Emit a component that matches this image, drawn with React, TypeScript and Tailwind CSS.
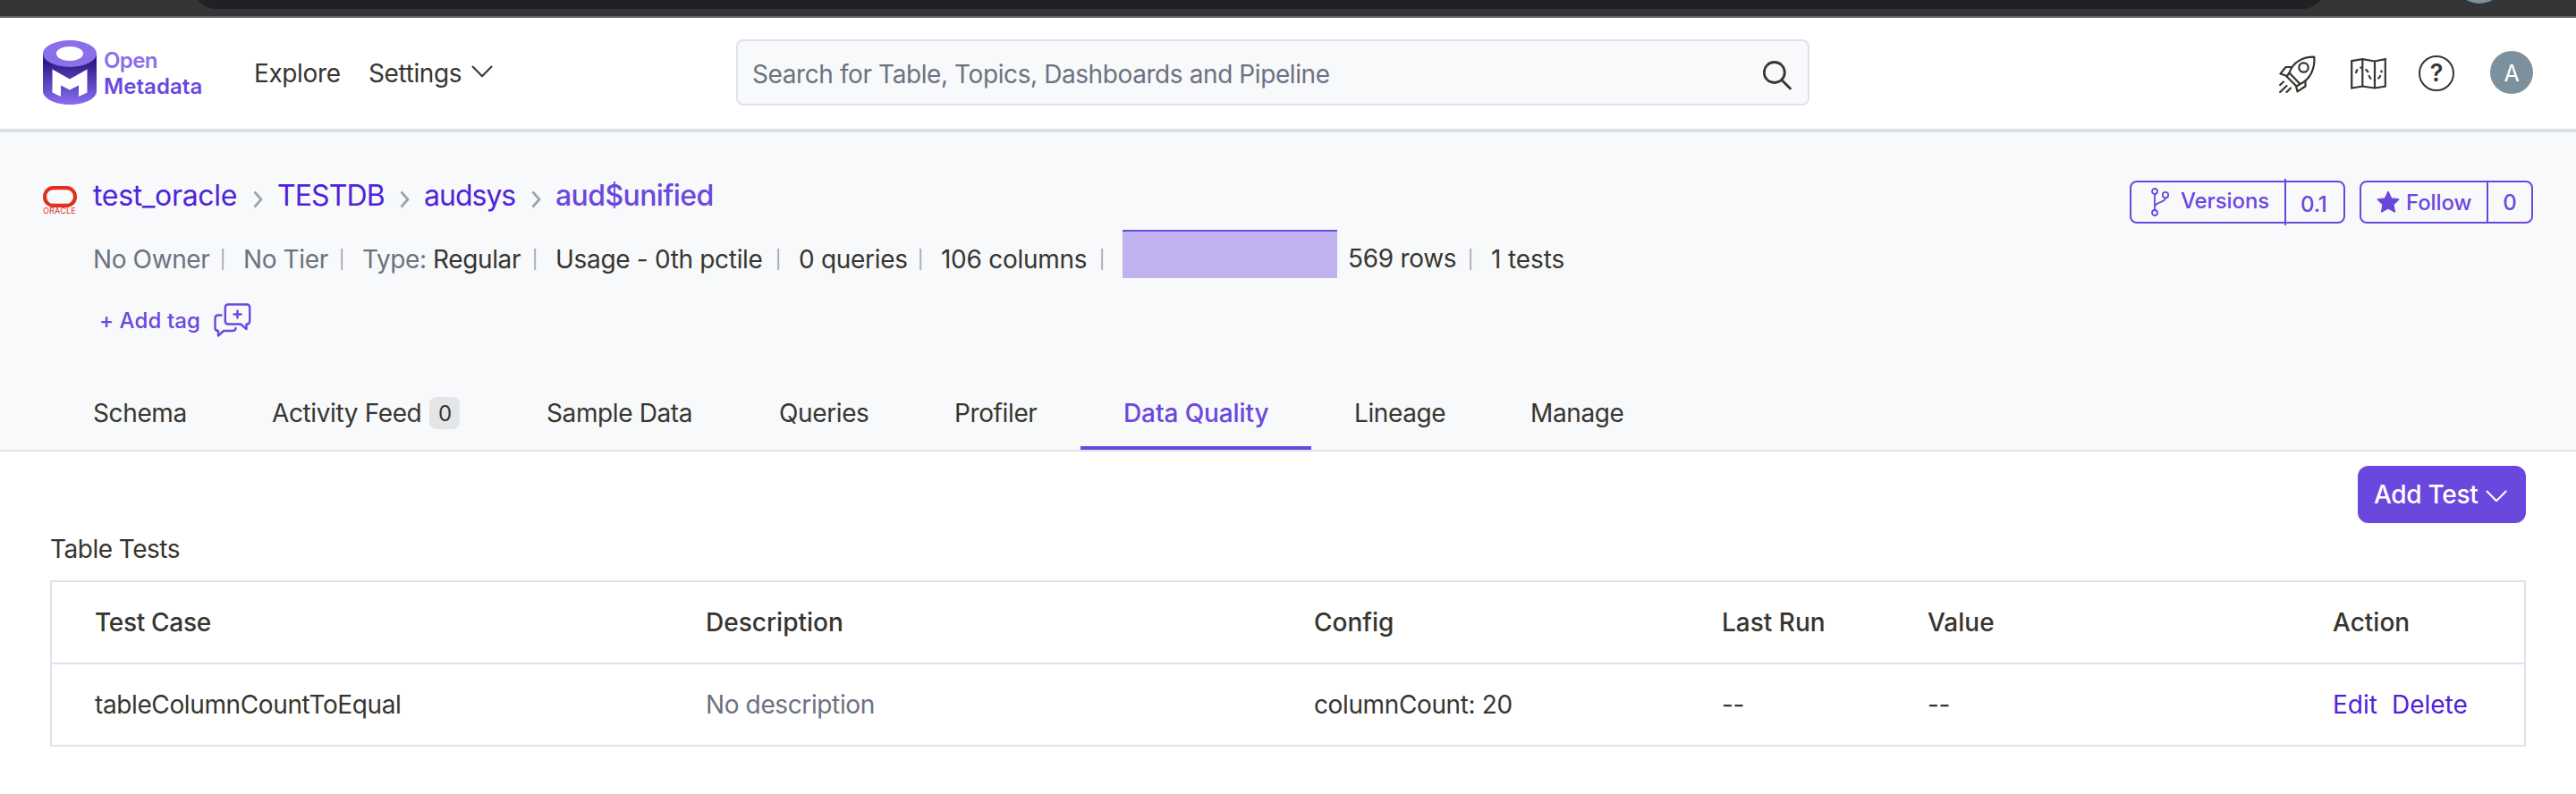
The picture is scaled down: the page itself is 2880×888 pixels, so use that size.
import React from "react";

const Sep = () => <span className="w-[10px] mr-[18px] text-center text-[20px] leading-[43px] text-[#9ca3af] tracking-normal">|</span>;

function Chevron() {
  return (
    <svg width="24" height="14" viewBox="0 0 24 14" fill="none" stroke="currentColor" strokeWidth="2" strokeLinecap="round" strokeLinejoin="round">
      <path d="M1.500 1.500 12 12.300 22.500 1.500" />
    </svg>
  );
}

function Crumb() {
  return (
    <svg width="27" height="20" viewBox="0 0 27 20" fill="none" stroke="#9ca3af" strokeWidth="2.700" className="mt-[17px] shrink-0">
      <path d="M1.500 1.500 9 10 1.500 18.500" />
    </svg>
  );
}

function Logo() {
  return (
    <svg width="60" height="72" viewBox="0 0 60 72">
      <defs>
        <linearGradient id="cyl" x1="0" y1="0" x2="0" y2="1">
          <stop offset="0.15" stopColor="#2c1886" />
          <stop offset="1" stopColor="#8a6ff0" />
        </linearGradient>
      </defs>
      <path d="M0 15V57C0 65 13 72 30 72S60 65 60 57V15Z" fill="url(#cyl)" />
      <ellipse cx="30" cy="15" rx="30" ry="15" fill="#8b6eea" />
      <ellipse cx="30" cy="15" rx="15" ry="8" fill="#fff" />
      <path d="M10.500 32.500 30 43.500 49.500 32.500V58.500L40 63V50.500L30 55.500 20 50.500V63L10.500 58.500Z" fill="#fff" />
    </svg>
  );
}

function Rocket() {
  return (
    <svg width="42" height="42" viewBox="0 0 42 42" fill="none" stroke="#37352f" strokeWidth="2.200" strokeLinecap="round" strokeLinejoin="round">
      <path d="M39.300 1.700C27 1.500 15.500 7 11.500 19.500L23.500 32C34.500 27 40.500 15 39.300 1.700Z" />
      <circle cx="27.500" cy="13.500" r="5.200" />
      <path d="M11.500 19.500 8.500 23.500 19.500 34.500 23.500 32" />
      <path d="M14 13H7.500L1.500 20.500 8.800 23" />
      <path d="M29.500 28.500V34.500L20.500 40.300 19 34.500" />
      <path d="M5 29.500 1.200 33M8.500 34 1.200 41M13 36.500 8.500 41" />
    </svg>
  );
}

function MapIcon() {
  return (
    <svg width="40" height="38" viewBox="0 0 40 38" fill="none" stroke="#37352f" strokeWidth="2.200" strokeLinejoin="miter">
      <path d="M1.200 4.200 13.300 2.200 27 4.500 38.800 2.200V32.500L27 34.500 13.300 32.500 1.200 34.500ZM13.300 2.200V32.500M27 4.500V34.500" />
      <path d="M6 18C6.500 13.500 9 11.500 13 11.500M16.500 13.500C19.500 15 20 18 20.500 20.500 21.500 24 24 25.500 28 25.500M30.500 24C33.500 22 34.500 18.500 34.500 14.500" strokeDasharray="5 3" />
    </svg>
  );
}

function Feedback() {
  return (
    <svg width="42" height="38" viewBox="0 0 42 38" fill="none" stroke="#6b48dd" strokeWidth="2.400" strokeLinejoin="round" strokeLinecap="round">
      <path d="M16 1.500H37C39 1.500 40.200 3 40.200 5V20C40.200 22 39 23.500 37 23.500H36.500V29L30 23.500H16C14 23.500 12.800 22 12.800 20V5C12.800 3 14 1.500 16 1.500Z" />
      <path d="M8.500 13.500H5C3 13.500 1.500 15 1.500 17V27.500C1.500 29.500 3 31 5 31V36.500L11 31H20C23 31 24.500 30 24.500 28" />
      <path d="M26.500 8.500V16.500M22.500 12.500H30.500" />
    </svg>
  );
}

function Branch() {
  return (
    <svg width="20" height="32" viewBox="0 0 20 32" fill="none" stroke="#6b48dd" strokeWidth="1.800">
      <circle cx="4" cy="4" r="3" />
      <circle cx="16" cy="8" r="3.200" />
      <circle cx="4" cy="28" r="3" />
      <path d="M4 7V25M16 11.200C16 17 5 15 4.200 21" />
    </svg>
  );
}

const tabs = [
  { label: "Schema", width: "w-[200px]" },
  { label: "Activity Feed", width: "w-[307px]", count: 0 },
  { label: "Sample Data", width: "w-[260px]" },
  { label: "Queries", width: "w-[196px]" },
  { label: "Profiler", width: "w-[189px]" },
  { label: "Data Quality", width: "w-[258px]", active: true },
  { label: "Lineage", width: "w-[197px]" },
  { label: "Manage", width: "w-[200px]" },
];

export default function App() {
  return (
    <div className="w-[2880px] h-[888px] bg-white overflow-hidden text-[#37352f] text-[28px] leading-[42px] tracking-[-0.38px] flex flex-col whitespace-nowrap font-['Inter',sans-serif]">
      <div className="h-5 shrink-0 bg-[#353535] border-b-2 border-[#666] flex items-start overflow-hidden">
        <div className="ml-[216px] -mt-[50px] w-[2384px] h-[60px] bg-[#202124] rounded-b-[26px] shrink-0" />
        <div className="ml-[144px] -mt-[52px] w-14 h-14 rounded-full bg-[#7c909d] shrink-0" />
      </div>

      <header className="h-[128px] shrink-0 border-b-4 border-[#dadde3] flex items-start">
        <div className="ml-[48px] mt-[25px]"><Logo /></div>
        <div className="ml-[8px] mt-[34px] w-[168px] flex flex-col font-semibold text-[24px] leading-[28.500px] tracking-[0.050px]">
          <span className="text-[#8b6eea] tracking-[-0.600px]">Open</span>
          <span className="text-[#6b48dd]">Metadata</span>
        </div>
        <span className="mt-[41px] w-[128px]">Explore</span>
        <span className="mt-[41px] w-[115px]">Settings</span>
        <span className="mt-[53px] w-[296px]"><Chevron /></span>
        <div className="mt-[24px] w-[1200px] h-[74px] rounded-lg border-2 border-[#dce3ec] bg-[#f8f9fb] flex items-center justify-between pl-[16px] pr-[16px]">
          <span className="text-[#6b7280] mt-[4px] tracking-[-0.410px]">Search for Table, Topics, Dashboards and Pipeline</span>
          <svg width="34" height="34" viewBox="0 0 34 34" fill="none" stroke="#37352f" strokeWidth="2.800" strokeLinecap="round" className="mt-[7px]"><circle cx="12.800" cy="13" r="11.500" /><path d="M21 21.500 30.500 31" /></svg>
        </div>
        <div className="ml-[525px] mt-[42px] w-[80px]"><Rocket /></div>
        <div className="mt-[44px] w-[76px]"><MapIcon /></div>
        <div className="mt-[42px] w-10 h-10 rounded-full border-[2.500px] border-[#37352f] flex items-center justify-center font-semibold text-[27px]">?</div>
        <div className="ml-[40px] mt-[37px] w-12 h-12 rounded-full bg-[#7c909d] text-white text-[25px] leading-[50px] text-center">A</div>
      </header>

      <section className="h-[357px] shrink-0 bg-[#f8f9fb] border-b-2 border-[#dce3ec] flex flex-col">
        <div className="h-[61px] pt-[48px] box-content -mb-[48px] flex justify-between">
          <div className="flex h-[46px] text-[32px] leading-[46px] text-[#4f23d9]">
            <div className="ml-[48px] mt-[12px] w-[56px] h-[32px] flex flex-col shrink-0">
              <svg width="38" height="24" viewBox="0 0 38 24"><rect x="2.100" y="2.100" width="33.800" height="19.800" rx="9.500" fill="none" stroke="#e1301e" strokeWidth="4.200" /></svg>
              <span className="text-[#e1301e] text-[9px] leading-[7px] tracking-[0.200px]">ORACLE</span>
            </div>
            <span className="w-[179px] tracking-[-0.330px]">test_oracle</span><Crumb />
            <span className="w-[137px] tracking-[-0.900px]">TESTDB</span><Crumb />
            <span className="w-[120px] tracking-[-1px]">audsys</span><Crumb />
            <span className="font-medium text-[#6b48dd] tracking-[-0.600px]">aud$unified</span>
          </div>
          <div className="mr-12 mt-[4px] flex items-center h-[52px] gap-4 text-[24px] font-medium text-[#6b48dd] tracking-[-0.100px]">
            <div className="w-[241px] h-12 rounded-lg border-2 border-[#6b48dd] flex items-center">
              <div className="w-[171px] h-[52px] pl-[22px] flex shrink-0">
                <span className="mt-[10px] w-[33px]"><Branch /></span>
                <span className="mt-[4px]">Versions</span>
              </div>
              <div className="w-[2px] h-[52px] bg-[#6b48dd] shrink-0" />
              <span className="pl-[16px] mt-[6px]">0.1</span>
            </div>
            <div className="w-[194px] h-12 rounded-lg border-2 border-[#6b48dd] flex items-stretch">
              <div className="w-[140px] pl-[17px] flex items-center">
                <svg width="26" height="26" viewBox="0 0 24 24" fill="#6b48dd" stroke="#6b48dd" strokeWidth="1.500" strokeLinejoin="round" className="mr-[7px]">
                  <path d="M12 1.500 15.200 8.300 22.800 9.200 17.300 14.400 18.700 22 12 18.300 5.300 22 6.700 14.400 1.200 9.200 8.800 8.300Z" />
                </svg>
                <span className="mt-[2px]">Follow</span>
              </div>
              <div className="w-[2px] bg-[#6b48dd]" />
              <span className="grow text-center mt-[2px]">0</span>
            </div>
          </div>
        </div>
        <div className="h-[56px] mt-[48px] pl-[104px] flex">
          <div className="mt-[12px] flex">
            <span className="text-[#6b7280] w-[140px]">No Owner</span><Sep />
            <span className="text-[#6b7280] w-[105px]">No Tier</span><Sep />
            <span className="text-[#6b7280] w-[79px]">Type:</span><span className="w-[109px]">Regular</span><Sep />
            <span className="w-[244px] tracking-[-0.320px]">Usage - 0th pctile</span><Sep />
            <span className="w-[131px] tracking-[-0.300px]">0 queries</span><Sep />
            <span className="w-[175px] tracking-[-0.280px]">106 columns</span><Sep />
          </div>
          <div className="w-[240px] h-[54px] bg-[#c0b1ef] border-t-2 border-[#6b48dd]" />
          <div className="mt-[12px] ml-[12px] flex"><span className="-mt-px w-[132px] tracking-[-0.300px]">569 rows</span><Sep /><span className="tracking-[-0.100px]">1 tests</span></div>
        </div>
        <div className="h-[44px] mt-[26px] pl-[111px] flex text-[#6b48dd]">
          <span className="w-[128px] text-[24px] font-medium leading-[40px] tracking-[0.100px]">+ Add tag</span>
          <Feedback />
        </div>
        <nav className="mt-[37px] h-[83px] flex pl-[56px]">
          {tabs.map((t) => (
            <div key={t.label} className={`${t.width} pl-[48px] pt-[5px] h-[83px] flex items-center border-b-4 ${t.active ? "border-[#6b48dd] text-[#6b48dd] font-medium tracking-[-0.100px]" : "border-transparent"}`}>
              {t.label}
              {t.count !== undefined && <span className="ml-[9px] w-[34px] h-9 rounded-lg bg-[#e4e5e9] text-[24px] leading-[37px] text-center">{t.count}</span>}
            </div>
          ))}
        </nav>
      </section>

      <main className="px-[56px] flex flex-col">
        <button className="self-end mt-[16px] w-[188px] h-[64px] rounded-xl bg-[#6b48dd] text-white font-medium tracking-[-0.300px] flex items-center pl-[18px]">
          Add Test<span className="ml-[9px] mt-[4px]"><Chevron /></span>
        </button>
        <h2 className="mt-[8px] tracking-[-0.500px]">Table Tests</h2>
        <div className="mt-[14px] border-2 border-[#dce3ec] w-[2768px]">
          <div className="grid grid-cols-[683px_680px_456px_230px_453px_1fr] h-[90px] items-center pl-[48px] font-medium tracking-normal">
            <span className="tracking-[-0.300px]">Test Case</span><span>Description</span><span>Config</span><span>Last Run</span><span>Value</span><span>Action</span>
          </div>
          <div className="grid grid-cols-[683px_680px_456px_230px_453px_1fr] h-[92px] items-center pl-[48px] border-t-2 border-[#dce3ec]">
            <span>tableColumnCountToEqual</span><span className="text-[#6b7280]">No description</span><span>columnCount: 20</span><span>--</span><span>--</span>
            <span className="flex gap-4 text-[#4f23d9] tracking-normal"><a>Edit</a><a>Delete</a></span>
          </div>
        </div>
      </main>
    </div>
  );
}
